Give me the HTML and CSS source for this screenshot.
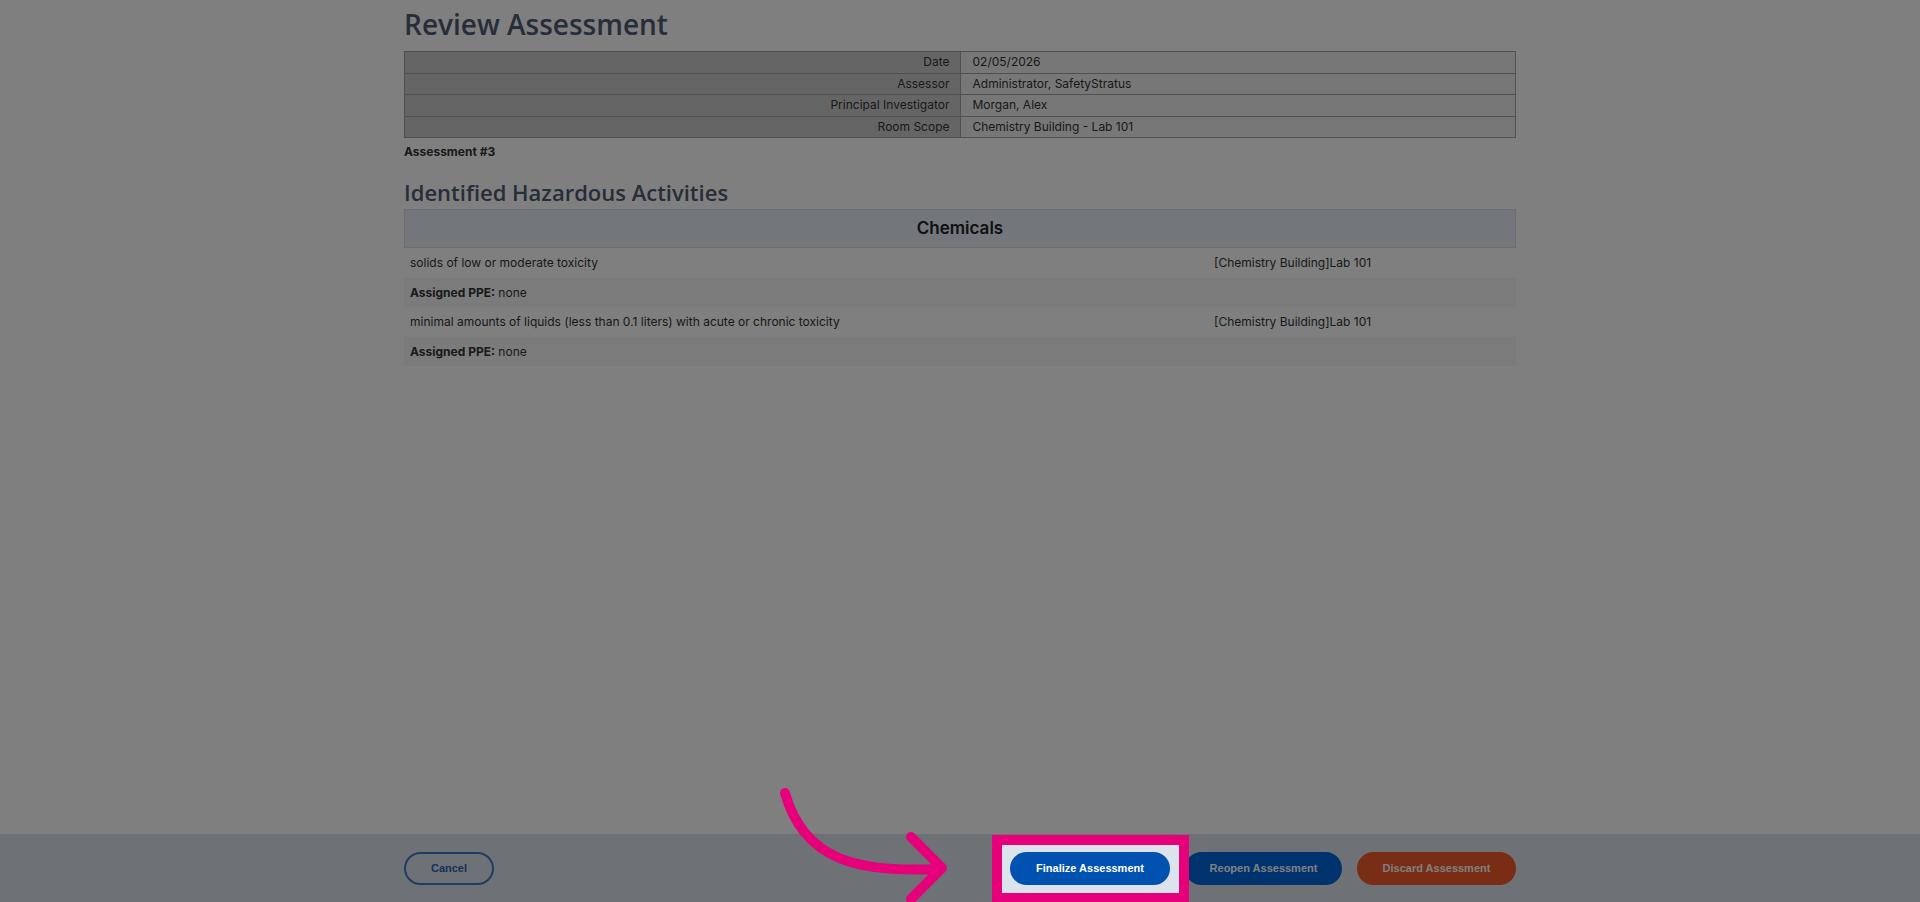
FILE: index.html
```html
<!DOCTYPE html>
<html lang="en">
<head>
    <meta charset="UTF-8">
    <meta name="viewport" content="width=device-width, initial-scale=1.0">
    <title>Review Assessment</title>
    <link rel="stylesheet" href="styles.css">
</head>
<body>
<div class="app">

    <main class="page">
        <h1 class="page-title">Review Assessment</h1>

        <!-- Assessment summary -->
        <table class="info-table">
            <tr><th>Date</th><td>02/05/2026</td></tr>
            <tr><th>Assessor</th><td>Administrator, SafetyStratus</td></tr>
            <tr><th>Principal Investigator</th><td>Morgan, Alex</td></tr>
            <tr><th>Room Scope</th><td>Chemistry Building - Lab 101</td></tr>
        </table>
        <div class="assessment-no">Assessment #3</div>

        <!-- Hazards grouped by category -->
        <h2 class="section-title">Identified Hazardous Activities</h2>
        <div class="hazard-group">
            <div class="hazard-head">Chemicals</div>
            <div class="hazard-row">
                <span>solids of low or moderate toxicity</span>
                <span>[Chemistry Building]Lab 101</span>
            </div>
            <div class="ppe-row"><b>Assigned PPE:</b> none</div>
            <div class="hazard-row">
                <span>minimal amounts of liquids (less than 0.1 liters) with acute or chronic toxicity</span>
                <span>[Chemistry Building]Lab 101</span>
            </div>
            <div class="ppe-row"><b>Assigned PPE:</b> none</div>
        </div>
    </main>

    <footer class="actions">
        <div class="actions-inner">
            <button class="btn btn-outline">Cancel</button>
            <div class="btn-group">
                <span class="focus-wrap">
                    <button class="btn btn-primary">Finalize Assessment</button>
                    <!-- walkthrough highlight -->
                    <span class="spotlight"></span>
                    <svg class="pointer" width="190" height="122" viewBox="0 0 190 122">
                        <path d="M12 12 C31 80 86 92 166 88" />
                        <path d="M138 56 L169 87 L138 118" />
                    </svg>
                </span>
                <button class="btn btn-reopen">Reopen Assessment</button>
                <button class="btn btn-discard">Discard Assessment</button>
            </div>
        </div>
    </footer>

</div>
</body>
</html>
```

FILE: styles.css
```css
html, body {
    margin: 0;
    overflow: hidden;
}
body {
    font-family: Inter, "Liberation Sans", sans-serif;
    font-size: 12px;
    color: #333;
    background: #fff;
}
.app {
    display: flex;
    flex-direction: column;
    min-height: 100vh;
}
.page {
    flex: 1;
    width: 1112px;
    margin: 0 auto;
}
.page-title {
    font-family: "Open Sans", sans-serif;
    font-size: 28px;
    font-weight: 600;
    line-height: 36px;
    color: #4e5b72;
    margin: 6px 0 9px;
}
.info-table {
    width: 100%;
    border-collapse: collapse;
    border: 1px solid #999;
}
.info-table th, .info-table td {
    border: 1px solid #a0a0a0;
    padding: 2px 12px;
    line-height: 16.5px;
}
.info-table th {
    width: 50%;
    text-align: right;
    font-weight: normal;
    background-color: #cbcbcb;
    padding-right: 10px;
}
.info-table td {
    background-color: #eeeeee;
}
.assessment-no {
    font-weight: bold;
    line-height: 16px;
    margin-top: 6px;
}
.section-title {
    font-family: "Open Sans", sans-serif;
    font-size: 22px;
    font-weight: 600;
    line-height: 24px;
    color: #4e5b72;
    margin: 20px 0 5px;
}
.hazard-head {
    background-color: #e6ecf7;
    border: 1px solid #d6dde9;
    height: 37px;
    line-height: 37px;
    text-align: center;
    font-size: 17px;
    font-weight: 600;
    color: #222;
}
.hazard-row {
    display: grid;
    grid-template-columns: 1fr 308px;
}
.hazard-row span, .ppe-row {
    padding: 6px;
    line-height: 17.5px;
}
.ppe-row {
    background-color: #f6f7f9;
}
.actions {
    background-color: #dde3ec;
    height: 68px;
}
.actions-inner {
    width: 1112px;
    height: 100%;
    margin: 0 auto;
    display: flex;
    align-items: center;
    justify-content: space-between;
}
.btn-group {
    display: flex;
    align-items: center;
    gap: 15px;
}
.btn {
    height: 33px;
    padding: 0;
    border-radius: 17px;
    border: 2px solid transparent;
    font-family: "Liberation Sans", Arial, sans-serif;
    font-size: 11px;
    font-weight: bold;
    white-space: nowrap;
    color: #fff;
    cursor: pointer;
}
.btn-outline {
    background: transparent;
    border-color: #3f78c8;
    color: #2a62b8;
    width: 90px;
}
.btn-primary {
    background-color: #0152b0;
    border-color: #0152b0;
    width: 160px;
}
.btn-reopen {
    background-color: #0066dc;
    border-color: #0066dc;
    width: 157px;
}
.btn-discard {
    background-color: #f25a28;
    border-color: #f25a28;
    width: 159px;
}
.focus-wrap {
    position: relative;
    display: flex;
}
.spotlight {
    position: absolute;
    top: -7px;
    right: -9px;
    bottom: -8px;
    left: -8px;
    z-index: 10;
    box-shadow: 0 0 0 10px #e6007a, 0 0 0 3000px rgba(0, 0, 0, 0.5);
    pointer-events: none;
}
.pointer {
    position: absolute;
    left: -237px;
    top: -71px;
    z-index: 11;
    fill: none;
    stroke: #e6007a;
    stroke-width: 10;
    stroke-linecap: round;
    stroke-linejoin: round;
}
```
